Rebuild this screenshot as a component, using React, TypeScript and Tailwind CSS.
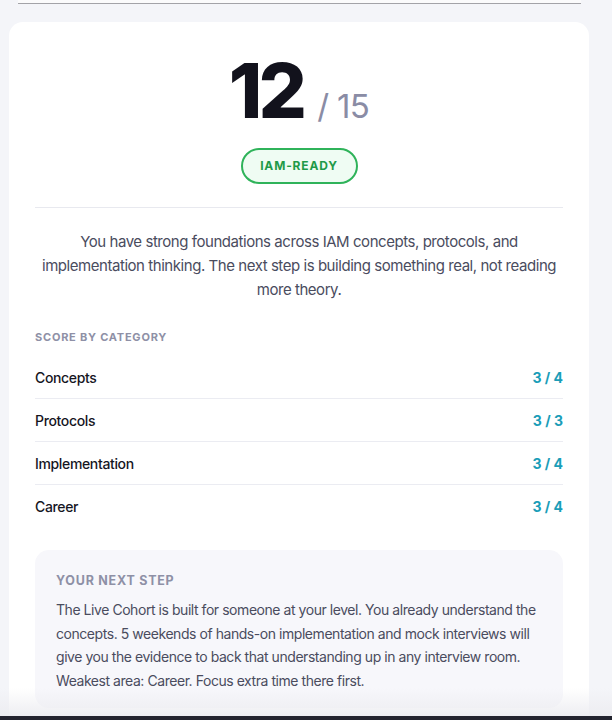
import React from "react";

const rows = [
  { name: "Concepts", score: "3 / 4" },
  { name: "Protocols", score: "3 / 3" },
  { name: "Implementation", score: "3 / 4" },
  { name: "Career", score: "3 / 4" },
];

export default function App() {
  return (
    <div
      className="relative h-[720px] w-[612px] overflow-hidden bg-[#f4f5f9]"
      style={{ fontFamily: "Inter, 'Noto Sans', sans-serif" }}
    >
      <div className="ml-[18px] mr-[31px] h-[4px] border-b border-[#a3a3a8] bg-[#fbfbfc]" />
      <div className="ml-[9px] mr-[23px] mt-[18px] rounded-[14px] bg-white px-[26px] pb-10 pt-[30px]">
        <div className="flex items-baseline justify-center">
          <span className="text-[76px] font-extrabold leading-none tracking-[-0.05em] text-[#12121c]">12</span>
          <span className="ml-[14px] text-[33px] font-normal leading-none tracking-[-0.02em] text-[#8a8ca5]">/ 15</span>
        </div>
        <div className="mt-5 flex justify-center">
          <div className="flex h-[36px] w-[117px] items-center justify-center rounded-full border-2 border-[#2fb35a] bg-[#effcf3] text-[12px] font-bold tracking-[0.07em] text-[#1f9a48]">
            IAM-READY
          </div>
        </div>
        <div className="mt-[23px] h-px bg-[#e8e9ef]" />
        <p className="mt-[22px] text-center text-[15px] leading-[24px] tracking-[-0.03em] text-[#4a4c5e]">
          You have strong foundations across IAM concepts, protocols, and implementation thinking. The next step is building something real, not reading more theory.
        </p>
        <div className="mt-[27px] text-[11px] font-bold leading-4 tracking-[0.07em] text-[#8e90a6]">
          SCORE BY CATEGORY
        </div>
        <div className="mt-[11px]">
          {rows.map((r, i) => (
            <div
              key={r.name}
              className={`flex h-[43px] items-center justify-between ${i < rows.length - 1 ? "border-b border-[#ebecf2]" : ""}`}
            >
              <span className="text-[14px] font-medium tracking-[-0.025em] text-[#16161f]">{r.name}</span>
              <span className="text-[14px] font-bold text-[#1a9db8]">{r.score}</span>
            </div>
          ))}
        </div>
        <div className="mt-[22px] rounded-[14px] bg-[#f7f7fb] pb-4 pl-[21px] pr-3 pt-[23px]">
          <div className="text-[12.5px] font-bold leading-4 tracking-[0.06em] text-[#8e90a6]">YOUR NEXT STEP</div>
          <p className="mt-[9px] text-[14px] leading-[23.5px] tracking-[-0.032em] text-[#4a4c5e]">
            The Live Cohort is built for someone at your level. You already understand the concepts. 5 weekends of hands-on implementation and mock interviews will give you the evidence to back that understanding up in any interview room. Weakest area: Career. Focus extra time there first.
          </p>
        </div>
      </div>
      <div className="pointer-events-none absolute bottom-[4px] left-0 right-0 h-[28px] bg-gradient-to-b from-transparent to-[#ececf0]/90" />
      <div className="absolute bottom-0 left-0 right-0 h-[4px] bg-[#23242f]" />
    </div>
  );
}
